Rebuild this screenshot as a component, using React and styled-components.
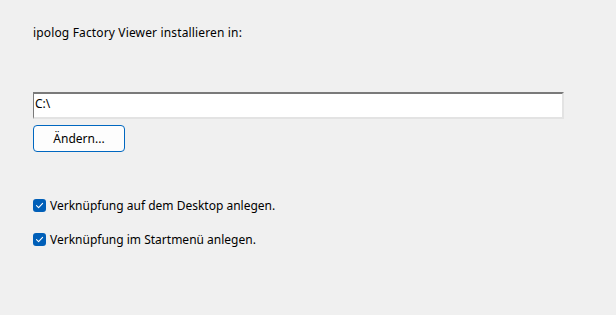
import React, { useState } from "react";
import styled, { createGlobalStyle } from "styled-components";

const GlobalStyle = createGlobalStyle`
  html, body {
    margin: 0;
    padding: 0;
    background: #f0f0f0;
  }
  body {
    font-family: "Noto Sans", "Open Sans", sans-serif;
    font-size: 12px;
    color: #000;
  }
`;

const Page = styled.div`
  width: 616px;
  height: 315px;
  background: #f0f0f0;
  box-sizing: border-box;
  padding: 24px 52px 0 33px;
  display: flex;
  flex-direction: column;
`;

const Heading = styled.div`
  line-height: 18px;
  height: 18px;
  letter-spacing: 0.15px;
`;

const PathInput = styled.div`
  margin-top: 50px;
  height: 27px;
  box-sizing: border-box;
  background: #fff;
  border-top: 2px solid #7a7a7a;
  border-left: 1px solid #7a7a7a;
  border-right: 2px solid #e3e3e3;
  border-bottom: 2px solid #e3e3e3;
  padding: 0 1px;
  line-height: 19px;
`;

const Button = styled.button`
  margin-top: 6px;
  width: 92px;
  height: 27px;
  box-sizing: border-box;
  background: #fdfdfd;
  border: 1px solid #0067c0;
  border-radius: 4px;
  font-family: inherit;
  font-size: 12px;
  color: #000;
  padding: 0;
`;

const Options = styled.div`
  margin-top: 45px;
  display: flex;
  flex-direction: column;
  gap: 17px;
`;

const Option = styled.label`
  display: flex;
  align-items: center;
  gap: 4px;
  line-height: 17px;
`;

const Box = styled.span`
  width: 13px;
  height: 13px;
  border-radius: 3px;
  background: ${(p) => (p.checked ? "#005fb8" : "#fff")};
  border: ${(p) => (p.checked ? "none" : "1px solid #8a8a8a")};
  display: flex;
  align-items: center;
  justify-content: center;
`;

const Check = () => (
  <svg width="9" height="9" viewBox="0 0 9 9">
    <path d="M1.5 4.7 L3.6 6.6 L7.6 2.4" fill="none" stroke="#fff" strokeWidth="1.1" strokeLinecap="round" strokeLinejoin="round" />
  </svg>
);

const CheckOption = ({ label, checked, onToggle }) => (
  <Option onClick={onToggle}>
    <Box checked={checked}>{checked && <Check />}</Box>
    <span>{label}</span>
  </Option>
);

const App = () => {
  const [desktop, setDesktop] = useState(true);
  const [start, setStart] = useState(true);

  return (
    <>
      <GlobalStyle />
      <Page>
        <Heading>ipolog Factory Viewer installieren in:</Heading>
        <PathInput>C:\</PathInput>
        <div>
          <Button>Ändern...</Button>
        </div>
        <Options>
          <CheckOption
            label="Verknüpfung auf dem Desktop anlegen."
            checked={desktop}
            onToggle={() => setDesktop(!desktop)}
          />
          <CheckOption
            label="Verknüpfung im Startmenü anlegen."
            checked={start}
            onToggle={() => setStart(!start)}
          />
        </Options>
      </Page>
    </>
  );
};

export default App;
